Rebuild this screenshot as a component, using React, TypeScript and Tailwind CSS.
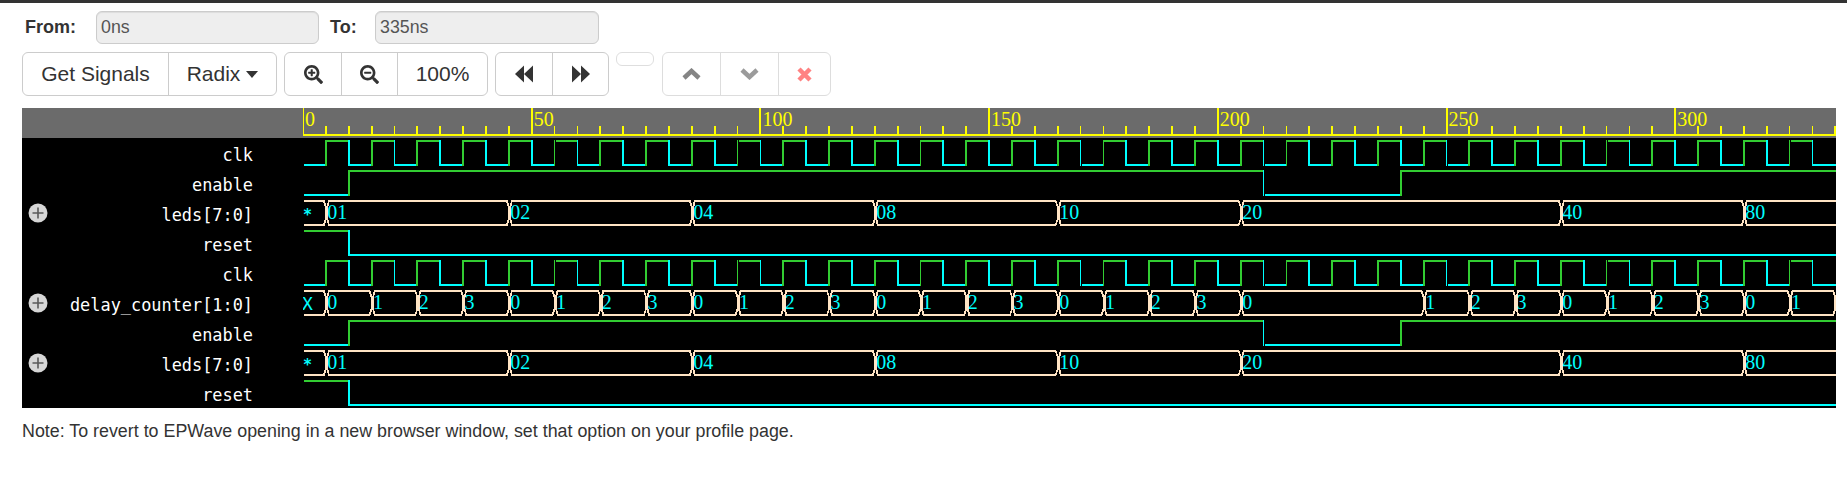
import React from "react";
import { FaSearchPlus, FaSearchMinus } from "react-icons/fa";

const PX = 4.574;
const X = (ns: number) => ns * PX;
const W = 1533;
const HI = 3;
const LO = 27;
const GREEN = "#32cd32";
const CYAN = "#00ffff";
const BUS = "#ffe4c4";
const VALUE_FONT = '"Liberation Serif", serif';
const MONO_FONT = '"DejaVu Sans Mono", monospace';

type Bit = { kind: "bit"; name: string; start: 0 | 1; edges: number[] };
type Bus = { kind: "bus"; name: string; segs: [number, string][]; close?: boolean };
type Sig = Bit | Bus;

const clkEdges: number[] = [];
for (let t = 5; t < 335; t += 5) clkEdges.push(t);

const ledSegs: [number, string][] = [
  [0, "*"], [5, "01"], [45, "02"], [85, "04"], [125, "08"], [165, "10"], [205, "20"], [275, "40"], [315, "80"],
];

const delaySegs: [number, string][] = [[0, "X"]];
{
  let v = 0;
  for (let t = 5; t <= 205; t += 10) {
    delaySegs.push([t, String(v % 4)]);
    v++;
  }
  v = 1;
  for (let t = 245; t <= 325; t += 10) {
    delaySegs.push([t, String(v % 4)]);
    v++;
  }
}

const signals: Sig[] = [
  { kind: "bit", name: "clk", start: 0, edges: clkEdges },
  { kind: "bit", name: "enable", start: 0, edges: [10, 210, 240] },
  { kind: "bus", name: "leds[7:0]", segs: ledSegs },
  { kind: "bit", name: "reset", start: 1, edges: [10] },
  { kind: "bit", name: "clk", start: 0, edges: clkEdges },
  { kind: "bus", name: "delay_counter[1:0]", segs: delaySegs, close: true },
  { kind: "bit", name: "enable", start: 0, edges: [10, 210, 240] },
  { kind: "bus", name: "leds[7:0]", segs: ledSegs },
  { kind: "bit", name: "reset", start: 1, edges: [10] },
];

function BitWave({ sig }: { sig: Bit }) {
  const parts: React.ReactNode[] = [];
  let level = sig.start;
  let from = 1;
  sig.edges.forEach((ns, i) => {
    const x = X(ns);
    const y = level ? HI : LO;
    parts.push(<line key={`h${i}`} x1={from} x2={x} y1={y} y2={y} stroke={level ? GREEN : CYAN} strokeWidth={2} />);
    const next = level ? 0 : 1;
    parts.push(<line key={`v${i}`} x1={x} x2={x} y1={HI - 1} y2={LO + 1} stroke={next ? GREEN : CYAN} strokeWidth={1.8} />);
    level = next as 0 | 1;
    from = x + 1;
  });
  const y = level ? HI : LO;
  parts.push(<line key="end" x1={from} x2={W} y1={y} y2={y} stroke={level ? GREEN : CYAN} strokeWidth={2} />);
  return <>{parts}</>;
}

function BusWave({ sig }: { sig: Bus }) {
  const parts: React.ReactNode[] = [];
  sig.segs.forEach(([ns, label], i) => {
    const end = i + 1 < sig.segs.length ? sig.segs[i + 1][0] : sig.close ? 335 : null;
    const s = X(ns);
    const e = end === null ? W : X(end);
    let d = "";
    const open = i === 0;
    if (open) {
      d += `M1 ${HI} L${e - 2} ${HI} L${e} ${HI + 6} L${e} ${LO - 6} L${e - 2} ${LO} L1 ${LO}`;
    } else if (end === null) {
      d += `M${W} ${HI} L${s + 3} ${HI} L${s + 1.5} ${HI + 6} L${s + 1.5} ${LO - 6} L${s + 3} ${LO} L${W} ${LO}`;
    } else {
      d += `M${s + 3} ${HI} L${e - 2} ${HI} L${e} ${HI + 6} L${e} ${LO - 6} L${e - 2} ${LO} L${s + 3} ${LO} L${s + 1.5} ${LO - 6} L${s + 1.5} ${HI + 6} Z`;
    }
    parts.push(<path key={`p${i}`} d={d} fill="none" stroke={BUS} strokeWidth={1.8} />);
    parts.push(
      open ? (
        <text key={`t${i}`} x={label === "X" ? -1 : 0} y={22} fill={CYAN} fontSize={label === "X" ? 18 : 15} fontWeight={label === "X" ? 400 : 700} fontFamily={MONO_FONT}>
          {label}
        </text>
      ) : (
        <text key={`t${i}`} x={s + 1.5} y={21} fill={CYAN} fontSize={20} fontFamily={VALUE_FONT}>
          {label}
        </text>
      ),
    );
  });
  return <>{parts}</>;
}

function Ruler() {
  const ticks: React.ReactNode[] = [];
  for (let t = 0; t <= 335; t += 5) {
    const major = t % 50 === 0;
    ticks.push(
      <line key={t} x1={X(t)} x2={X(t)} y1={major ? 0 : 18} y2={27} stroke="#ffff00" strokeWidth={major ? 2 : 1.8} />,
    );
    if (major) {
      ticks.push(
        <text key={`l${t}`} x={X(t) + 2} y={18} fill="#ffff00" fontSize={20} fontFamily={VALUE_FONT}>
          {t}
        </text>,
      );
    }
  }
  return (
    <div className="flex h-[30px] bg-[#6b6b6b]">
      <div className="w-[281px] shrink-0" />
      <svg width={W} height={30} shapeRendering="crispEdges" className="block">
        <line x1={0} x2={W} y1={27} y2={27} stroke="#ffff00" strokeWidth={2} />
        {ticks}
      </svg>
    </div>
  );
}

function PlusCircle() {
  return (
    <svg width={20} height={20} viewBox="0 0 20 20" className="block">
      <circle cx={10} cy={10} r={9.5} fill="#d6d6d6" />
      <path d="M10 4.5V15.5M4.5 10H15.5" stroke="#5a5a5a" strokeWidth={1.6} />
    </svg>
  );
}

function Row({ sig }: { sig: Sig }) {
  return (
    <div className="flex h-[30px]">
      <div className="flex w-[281px] shrink-0 items-center pl-[6px] pr-[50px]">
        <div className="w-[20px] shrink-0">{sig.kind === "bus" && <PlusCircle />}</div>
        <div
          className="flex-1 pt-[4px] text-right text-[16.9px] leading-[26px] whitespace-pre text-white"
          style={{ fontFamily: MONO_FONT }}
        >
          {sig.name}
        </div>
      </div>
      <svg width={W} height={30} shapeRendering="crispEdges" className="block overflow-hidden">
        {sig.kind === "bit" ? <BitWave sig={sig} /> : <BusWave sig={sig} />}
      </svg>
    </div>
  );
}

const btn = "flex h-full items-center justify-center border-l border-[#ccc] first:border-l-0";

function Backward() {
  return (
    <svg width={18} height={18} viewBox="0 0 18 18" className="block">
      <polygon points="0,9 9,0.5 9,17.5" fill="#333" />
      <polygon points="9,9 18,0.5 18,17.5" fill="#333" />
    </svg>
  );
}

function Forward() {
  return (
    <svg width={18} height={18} viewBox="0 0 18 18" className="block">
      <polygon points="0,0.5 9,9 0,17.5" fill="#333" />
      <polygon points="9,0.5 18,9 9,17.5" fill="#333" />
    </svg>
  );
}

export default function App() {
  return (
    <div className="min-h-[482px] bg-white text-[#333]" style={{ fontFamily: '"Liberation Sans", Arial, sans-serif' }}>
      <div className="h-[3px] bg-[#333]" />

      <div className="mt-[8px] flex h-[33px] items-center pl-[25px] text-[17.8px]">
        <label className="w-[71px] text-[18px] font-bold">From:</label>
        <div className="flex h-full w-[223px] items-center rounded-[6px] border border-[#ccc] bg-[#eee] pl-[4px] text-[#555] shadow-[inset_0_1px_1px_rgba(0,0,0,0.075)]">
          0ns
        </div>
        <label className="ml-[11px] w-[45px] text-[18px] font-bold">To:</label>
        <div className="flex h-full w-[224px] items-center rounded-[6px] border border-[#ccc] bg-[#eee] pl-[4px] text-[#555] shadow-[inset_0_1px_1px_rgba(0,0,0,0.075)]">
          335ns
        </div>
      </div>

      <div className="mt-[8px] flex h-[44px] items-start pl-[22px] text-[21px]">
        <div className="flex h-full w-[255px] rounded-[6px] border border-[#ccc]">
          <div className={`${btn} w-[145px]`}>Get Signals</div>
          <div className={`${btn} flex-1 gap-[6px]`}>
            Radix
            <svg width={12} height={7} viewBox="0 0 12 7" className="block">
              <polygon points="0,0 12,0 6,7" fill="#333" />
            </svg>
          </div>
        </div>
        <div className="ml-[7px] flex h-full w-[204px] rounded-[6px] border border-[#ccc]">
          <div className={`${btn} w-[56px]`}>
            <FaSearchPlus size={19} />
          </div>
          <div className={`${btn} w-[56px]`}>
            <FaSearchMinus size={19} />
          </div>
          <div className={`${btn} flex-1`}>100%</div>
        </div>
        <div className="ml-[7px] flex h-full w-[114px] rounded-[6px] border border-[#ccc]">
          <div className={`${btn} w-[56px]`}>
            <Backward />
          </div>
          <div className={`${btn} flex-1`}>
            <Forward />
          </div>
        </div>
        <div className="ml-[7px] h-[14px] w-[38px] rounded-[6px] border border-[#ccc] opacity-65" />
        <div className="ml-[8px] flex h-full w-[169px] rounded-[6px] border border-[#ccc] opacity-65">
          <div className={`${btn} w-[57px]`}>
            <svg width={19} height={12} viewBox="0 0 19 12" className="block">
              <polyline points="2,10 9.5,3 17,10" fill="none" stroke="#444" strokeWidth={4.5} />
            </svg>
          </div>
          <div className={`${btn} w-[58px]`}>
            <svg width={19} height={12} viewBox="0 0 19 12" className="block">
              <polyline points="2,2 9.5,9 17,2" fill="none" stroke="#666" strokeWidth={4.5} />
            </svg>
          </div>
          <div className={`${btn} flex-1`}>
            <svg width={15} height={15} viewBox="0 0 15 15" className="block">
              <path d="M2 2L13 13M13 2L2 13" fill="none" stroke="#ff4040" strokeWidth={4.5} />
            </svg>
          </div>
        </div>
      </div>

      <div className="mt-[12px] ml-[22px] w-[1814px]">
        <Ruler />
        <div className="bg-black">
          {signals.map((s, i) => (
            <Row key={i} sig={s} />
          ))}
        </div>
      </div>

      <p className="mt-[12px] ml-[22px] text-[17.85px] leading-[23px]">
        Note: To revert to EPWave opening in a new browser window, set that option on your profile page.
      </p>
    </div>
  );
}
